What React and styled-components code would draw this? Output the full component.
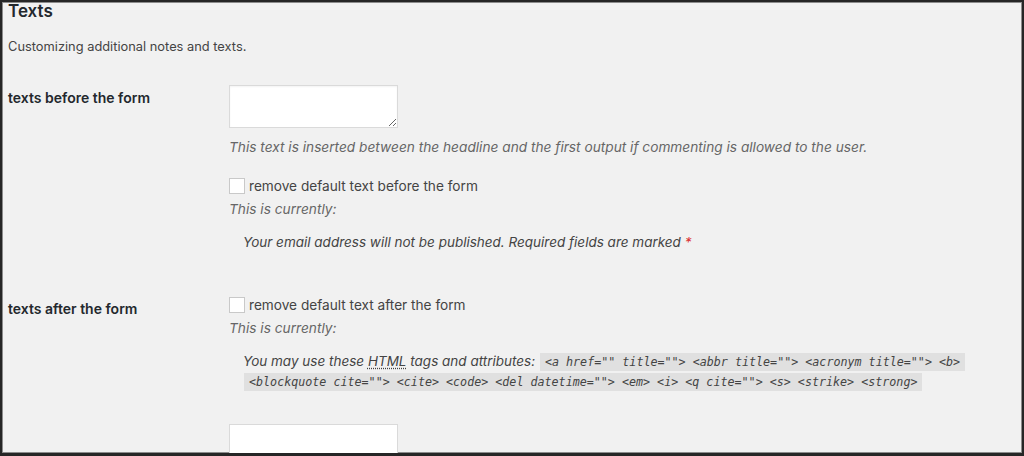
import React from "react";
import styled, { createGlobalStyle } from "styled-components";

const Global = createGlobalStyle`
  html, body { margin: 0; padding: 0; background: #f1f1f1; }
  * { box-sizing: border-box; }
`;

const Frame = styled.div`
  width: 1024px;
  height: 456px;
  overflow: hidden;
  background: #f1f1f1;
  border: 2px solid #262626;
  border-bottom-width: 3px;
  box-shadow: inset 1px 1px 0 #8c8c8c, inset -1px -1px 0 #8c8c8c;
  padding: 0 0 0 6px;
  font-family: Inter, "Liberation Sans", Arial, sans-serif;
  color: #444;
`;

const Title = styled.h2`
  margin: 0;
  padding-top: 1px;
  font-size: 17px;
  line-height: 17px;
  font-weight: 600;
  color: #23282d;
`;

const Intro = styled.p`
  margin: 18px 0 0;
  font-size: 12.85px;
  line-height: 18px;
  color: #444;
`;

const Table = styled.div`
  display: grid;
  grid-template-columns: 221px 1fr;
  row-gap: 45px;
  margin-top: 29px;
  align-items: start;
`;

const Label = styled.div`
  padding-top: ${(p) => p.$offset}px;
  font-size: 14px;
  line-height: 18px;
  font-weight: 600;
  color: #23282d;
`;

const Field = styled.div`
  display: flex;
  flex-direction: column;
  align-items: flex-start;
`;

const TextArea = styled.textarea`
  display: block;
  width: 169px;
  height: 43px;
  margin: 0;
  background: #fff;
  border: 1px solid #dadada;
  box-shadow: inset 0 1px 2px rgba(0, 0, 0, 0.05);
  border-radius: 0;
  font: inherit;
`;

const Input = styled.input`
  display: block;
  width: 169px;
  height: 34px;
  margin: 32px 0 0;
  background: #fff;
  border: 1px solid #dadada;
  border-radius: 0;
`;

const Description = styled.p`
  margin: ${(p) => p.$top}px 0 0;
  font-size: 13.7px;
  line-height: 18px;
  font-style: italic;
  color: #666;
`;

const CheckRow = styled.label`
  display: flex;
  align-items: center;
  gap: 4px;
  height: 16px;
  margin-top: ${(p) => p.$top}px;
  font-size: 13.65px;
  color: #444;
`;

const Check = styled.input`
  appearance: none;
  width: 16px;
  height: 16px;
  margin: 0;
  background: #fff;
  border: 1px solid #c9c9c9;
  border-radius: 0;
`;

const Quote = styled.blockquote`
  margin: 15px 0 0 14px;
  max-width: 760px;
  font-size: 13.5px;
  line-height: 19px;
  font-style: italic;
  color: #444;
`;

const Required = styled.span`
  color: #dc3232;
`;

const Abbr = styled.abbr`
  text-decoration: underline dotted;
  text-underline-offset: 2px;
`;

const Code = styled.code`
  padding: 2px 5px 2px;
  margin: 0 1px;
  background: rgba(0, 0, 0, 0.065);
  font-family: "DejaVu Sans Mono", monospace;
  font-size: 11.7px;
  font-style: italic;
  color: #444;
  -webkit-box-decoration-break: clone;
  box-decoration-break: clone;
`;

export default function App() {
  return (
    <>
      <Global />
      <Frame>
        <Title>Texts</Title>
        <Intro>Customizing additional notes and texts.</Intro>
        <Table>
          <Label $offset={4}>texts before the form</Label>
          <Field>
            <TextArea />
            <Description $top={10}>
              This text is inserted between the headline and the first output if commenting is allowed to the user.
            </Description>
            <CheckRow $top={22}>
              <Check type="checkbox" />
              remove default text before the form
            </CheckRow>
            <Description $top={6}>This is currently:</Description>
            <Quote>
              Your email address will not be published. Required fields are marked <Required>*</Required>
            </Quote>
          </Field>

          <Label $offset={3}>texts after the form</Label>
          <Field>
            <CheckRow $top={0}>
              <Check type="checkbox" />
              remove default text after the form
            </CheckRow>
            <Description $top={6}>This is currently:</Description>
            <Quote>
              You may use these <Abbr title="HyperText Markup Language">HTML</Abbr> tags and attributes:{" "}
              <Code>
                {' <a href="" title=""> <abbr title=""> <acronym title=""> <b> <blockquote cite=""> <cite> <code> <del datetime=""> <em> <i> <q cite=""> <s> <strike> <strong> '}
              </Code>
            </Quote>
            <Input type="text" />
          </Field>
        </Table>
      </Frame>
    </>
  );
}
